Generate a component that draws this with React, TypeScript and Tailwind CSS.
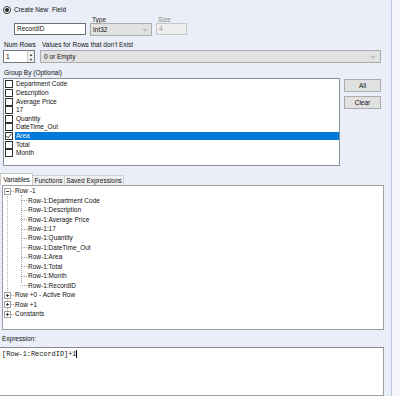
import { ChevronDown } from 'lucide-react';

const groupItems = [
  'Department Code',
  'Description',
  'Average Price',
  '17',
  'Quantity',
  'DateTime_Out',
  'Area',
  'Total',
  'Month',
];

const childRows = [
  'Row-1:Department Code',
  'Row-1:Description',
  'Row-1:Average Price',
  'Row-1:17',
  'Row-1:Quantity',
  'Row-1:DateTime_Out',
  'Row-1:Area',
  'Row-1:Total',
  'Row-1:Month',
  'Row-1:RecordID',
];

function Expander({ open }: { open: boolean }) {
  return (
    <div className="relative w-[7px] h-[7px] border border-[#a0a0a0] bg-white shrink-0">
      <div className="absolute left-[1px] top-[2px] w-[3px] h-px bg-[#444]" />
      {!open && <div className="absolute left-[2px] top-[1px] w-px h-[3px] bg-[#444]" />}
    </div>
  );
}

function CheckBox({ checked }: { checked: boolean }) {
  return (
    <div className="w-[8px] h-[8px] border border-[#333] bg-white shrink-0 flex items-center justify-center">
      {checked && (
        <svg width="6" height="6" viewBox="0 0 6 6">
          <path d="M0.5 3 L2.2 4.8 L5.5 0.8" stroke="#222" strokeWidth="0.9" fill="none" />
        </svg>
      )}
    </div>
  );
}

export default function App() {
  return (
    <div
      className="w-[400px] h-[396px] overflow-hidden flex bg-[#f3f5fb] text-[6.5px] leading-[8px] text-[#111]"
      style={{ fontFamily: '"Liberation Sans", Arial, sans-serif' }}
    >
      <div className="w-[392px] h-full bg-[#eaeef8] border-r border-[#b9c6e2] flex flex-col">
        {/* Create New Field */}
        <div className="flex items-center gap-[3px] pl-[3px] mt-[6px] h-[8px]">
          <div className="w-[8px] h-[8px] rounded-full border border-[#333] bg-white flex items-center justify-center">
            <div className="w-[4px] h-[4px] rounded-full bg-[#222]" />
          </div>
          <span className="whitespace-pre">Create New  Field</span>
        </div>

        {/* Field row */}
        <div className="flex pl-[14px] mt-[3px] h-[6px] items-center">
          <div className="w-[72px]" />
          <div className="ml-[5px] w-[64px] text-[#222] pl-px">Type</div>
          <div className="ml-[2px] text-[#888] pl-px">Size</div>
        </div>
        <div className="flex pl-[14px] h-[13px]">
          <div className="w-[72px] h-[12px] border border-[#6e6e6e] bg-white flex items-center pl-[2px]">RecordID</div>
          <div className="ml-[4px] w-[62px] h-[13px] border border-[#adadad] bg-[#e1e1e1] flex items-center justify-between pl-[2px] pr-[3px]">
            <span>Int32</span>
            <ChevronDown className="w-[6px] h-[6px] text-[#555]" strokeWidth={2} />
          </div>
          <div className="ml-[4px] w-[31px] h-[12px] border border-[#c8c8c8] bg-[#eeeeee] text-[#999] flex items-center pl-[2px]">4</div>
        </div>

        {/* Num Rows */}
        <div className="flex pl-[4px] mt-[6px] h-[6px] items-center">
          <span className="w-[38px]">Num Rows</span>
          <span>Values for Rows that don't Exist</span>
        </div>
        <div className="flex pl-[3px] mt-[2px] h-[13px]">
          <div className="w-[32px] h-[13px] border border-[#7a7a7a] bg-white flex">
            <div className="flex-1 flex items-center pl-[2px]">1</div>
            <div className="w-[7px] border-l border-[#ccc] bg-[#f0f0f0] flex flex-col items-center justify-center text-[4px] leading-[5px] text-[#333]">
              <span>▲</span>
              <span>▼</span>
            </div>
          </div>
          <div className="ml-[5px] w-[341px] h-[13px] border border-[#adadad] bg-[#e1e1e1] flex items-center justify-between pl-[3px] pr-[4px]">
            <span>0 or Empty</span>
            <ChevronDown className="w-[6px] h-[6px] text-[#555]" strokeWidth={2} />
          </div>
        </div>

        {/* Group By */}
        <div className="pl-[4px] mt-[7px] h-[6px] flex items-center">Group By (Optional)</div>
        <div className="flex pl-[3px] mt-[2px]">
          <div className="w-[337px] h-[88px] border border-[#8e939b] bg-white pt-[1px]">
            {groupItems.map((item) => (
              <div key={item} className="flex items-center h-[8.63px]">
                <div className="pl-[1px] pr-[2px]">
                  <CheckBox checked={item === 'Area'} />
                </div>
                <div
                  className={`flex-1 h-full flex items-center pl-px ${
                    item === 'Area' ? 'bg-[#0078d7] text-white' : ''
                  }`}
                >
                  {item}
                </div>
              </div>
            ))}
          </div>
          <div className="ml-[4px] flex flex-col gap-[4px] pt-[1px]">
            <button className="w-[37px] h-[13px] border border-[#adadad] bg-[#e1e1e1] flex items-center justify-center">All</button>
            <button className="w-[37px] h-[13px] border border-[#adadad] bg-[#e1e1e1] flex items-center justify-center">Clear</button>
          </div>
        </div>

        {/* Tabs */}
        <div className="flex mt-[8px] h-[11px] items-end">
          <div className="w-[33px] h-[12px] bg-white border border-b-0 border-[#c6c6c6] flex items-center justify-center">Variables</div>
          <div className="w-[32px] h-[10px] bg-[#f0f0f0] border border-b-0 border-l-0 border-[#d0d0d0] flex items-center justify-center">Functions</div>
          <div className="w-[59px] h-[10px] bg-[#f0f0f0] border border-b-0 border-l-0 border-[#d0d0d0] flex items-center justify-center">Saved Expressions</div>
        </div>

        {/* Tree */}
        <div className="ml-[2px] w-[382px] h-[145px] border border-[#a0a0a0] bg-white relative pt-[0.5px]">
          <div className="absolute left-[4px] top-[10px] h-[119px] border-l border-dotted border-[#b0b0b0]" />
          <div className="absolute left-[18px] top-[9px] h-[88px] border-l border-dotted border-[#a0a0a0]" />
          <div className="flex items-center h-[9.46px] pl-[1px]">
            <Expander open={true} />
            <div className="w-[3px] border-t border-dotted border-[#a0a0a0]" />
            <span className="ml-[1px]">Row -1</span>
          </div>
          {childRows.map((row) => (
            <div key={row} className="flex items-center h-[9.46px] pl-[19px]">
              <div className="w-[5px] border-t border-dotted border-[#a0a0a0]" />
              <span className="ml-px">{row}</span>
            </div>
          ))}
          {['Row +0 - Active Row', 'Row +1', 'Constants'].map((row) => (
            <div key={row} className="flex items-center h-[9.46px] pl-[1px]">
              <Expander open={false} />
              <div className="w-[3px] border-t border-dotted border-[#a0a0a0]" />
              <span className="ml-[1px]">{row}</span>
            </div>
          ))}
        </div>

        {/* Expression */}
        <div className="pl-[2px] mt-[6px] h-[6px] flex items-center">Expression:</div>
        <div className="mt-[5px] w-[384px] flex-1 border border-[#a0a0a0] border-t-[#8a8a8a] border-l-0 bg-white pl-[2px] pt-[2px]">
          <span
            className="text-[6.9px] leading-[8px]"
            style={{ fontFamily: '"Liberation Mono", "Courier New", monospace' }}
          >
            [Row-1:RecordID]+1
          </span>
          <span className="inline-block w-px h-[8px] bg-black align-top" />
        </div>
      </div>
    </div>
  );
}
